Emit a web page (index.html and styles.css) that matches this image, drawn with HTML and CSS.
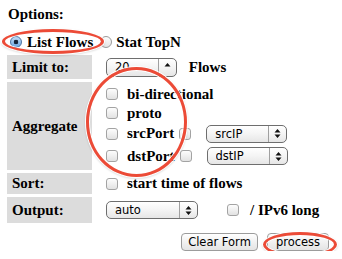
FILE: index.html
```html
<!DOCTYPE html>
<html lang="en">
<head>
  <meta charset="UTF-8" />
  <meta name="viewport" content="width=device-width, initial-scale=1.0" />
  <title>Options</title>
  <link rel="stylesheet" href="styles.css">
</head>
<body>
  <form class="options">
    <div class="title">Options:</div>
    <div class="mode">
      <label class="mode-item"><input type="radio" name="mode" class="radio" checked> List Flows</label>
      <label class="mode-item"><input type="radio" name="mode" class="radio radio-2"> Stat TopN</label>
    </div>

    <table class="opts">
      <tr class="row-limit">
        <th>Limit to:</th>
        <td>
          <span class="sel sel-limit">
            <select><option>20</option><option>50</option><option>100</option></select>
            <span class="arr arr-up"><svg width="7" height="11" viewBox="0 0 7 11"><path d="M3.5 1 L6.5 4.5 L0.5 4.5 Z" fill="#111"/></svg></span>
          </span>
          <span class="after-sel">Flows</span>
        </td>
      </tr>
      <tr class="row-agg">
        <th>Aggregate</th>
        <td>
          <div class="agg"><input type="checkbox" class="cb"> bi-directional</div>
          <div class="agg"><input type="checkbox" class="cb"> proto</div>
          <div class="agg agg-src">
            <input type="checkbox" class="cb"> srcPort
            <input type="checkbox" class="cb cb-2">
            <span class="sel sel-ip">
              <select><option>srcIP</option></select>
              <span class="arr"><svg width="7" height="11" viewBox="0 0 7 11"><path d="M3.5 1 L6.5 4.5 L0.5 4.5 Z M0.5 6.5 L6.5 6.5 L3.5 10 Z" fill="#111"/></svg></span>
            </span>
          </div>
          <div class="agg agg-dst">
            <input type="checkbox" class="cb"> dstPort
            <input type="checkbox" class="cb cb-2">
            <span class="sel sel-ip">
              <select><option>dstIP</option></select>
              <span class="arr"><svg width="7" height="11" viewBox="0 0 7 11"><path d="M3.5 1 L6.5 4.5 L0.5 4.5 Z M0.5 6.5 L6.5 6.5 L3.5 10 Z" fill="#111"/></svg></span>
            </span>
          </div>
        </td>
      </tr>
      <tr class="row-sort">
        <th>Sort:</th>
        <td><div class="agg"><input type="checkbox" class="cb"> start time of flows</div></td>
      </tr>
      <tr class="row-output">
        <th>Output:</th>
        <td>
          <div class="agg">
            <span class="sel sel-out">
              <select><option>auto</option><option>line</option><option>long</option></select>
              <span class="arr"><svg width="7" height="11" viewBox="0 0 7 11"><path d="M3.5 1 L6.5 4.5 L0.5 4.5 Z M0.5 6.5 L6.5 6.5 L3.5 10 Z" fill="#111"/></svg></span>
            </span>
            <input type="checkbox" class="cb cb-ipv6"> / IPv6 long
          </div>
        </td>
      </tr>
    </table>

    <div class="actions">
      <button type="reset" class="btn btn-clear">Clear Form</button>
      <button type="submit" class="btn btn-process">process</button>
    </div>
  </form>

  <!-- annotation marks drawn over the form -->
  <div class="mark mark-mode"></div>
  <div class="mark mark-agg"></div>
  <div class="mark mark-process"></div>
</body>
</html>
```

FILE: styles.css
```css
body {
  margin: 0;
  padding: 0 5px;
  position: relative;
  background-color: #fff;
  color: #000;
  font-family: "Liberation Serif", "Times New Roman", serif;
  font-size: 15px;
  font-weight: bold;
}
.title {
  padding: 6px 0 0 3px;
  line-height: 17px;
}
.mode {
  display: flex;
  align-items: center;
  height: 24px;
  margin-top: 7px;
}
.mode-item {
  display: flex;
  align-items: center;
}
.radio {
  appearance: none;
  width: 12px;
  height: 12px;
  margin: 0 5px;
  border: 1px solid #9a9a9a;
  border-radius: 50%;
  background: linear-gradient(#fdfdfd, #e4e4e4);
  box-sizing: border-box;
}
.radio:checked {
  border-color: #4d74a3;
  background: radial-gradient(circle, #15243a 0 2px, transparent 2.6px), linear-gradient(#c4def6, #6aa6e2);
}
.radio-2 {
  margin: 0 4px 0 7px;
}
.opts {
  border-collapse: separate;
  border-spacing: 2px 3px;
  margin-top: -2px;
}
.opts th {
  width: 80px;
  padding: 0 0 0 5px;
  background-color: #dcdcdc;
  text-align: left;
  vertical-align: middle;
}
.opts td {
  padding: 0 0 0 12px;
  white-space: nowrap;
  vertical-align: middle;
}
.row-limit { height: 24px; }
.row-agg { height: 88px; }
.row-sort { height: 21px; }
.row-output { height: 26px; }
.agg {
  display: flex;
  align-items: center;
  height: 19px;
}
.agg-src { height: 22px; }
.agg-dst { height: 23px; }
.cb {
  appearance: none;
  width: 12px;
  height: 12px;
  margin: 0 9px 0 0;
  border: 1px solid #a3a3a3;
  border-radius: 3px;
  background: linear-gradient(#fdfdfd, #e2e2e2);
  box-sizing: border-box;
  flex-shrink: 0;
}
.cb-2 {
  margin: 0 15px 0 5px;
}
.cb-ipv6 {
  margin: 0 11px 0 29px;
}
.sel {
  display: inline-flex;
  vertical-align: middle;
  height: 18px;
  box-sizing: border-box;
  border: 1px solid #6e6e6e;
  border-radius: 5px;
  background: linear-gradient(#fff, #f4f4f4 50%, #e6e6e6);
  overflow: hidden;
}
.sel select {
  appearance: none;
  flex: 1;
  min-width: 0;
  border: none;
  background: transparent;
  padding: 0 0 0 8px;
  margin: 0;
  color: #000;
  font-family: "DejaVu Sans", sans-serif;
  font-size: 11.5px;
  font-weight: normal;
}
.sel .arr {
  width: 17px;
  border-left: 1px solid #a0a0a0;
  display: flex;
  align-items: center;
  justify-content: center;
}
.sel .arr-up {
  align-items: flex-start;
  padding-top: 3px;
}
.sel-limit { width: 71px; height: 19px; }
.sel-ip { width: 81px; }
.sel-out { width: 92px; }
.after-sel {
  margin-left: 8px;
  vertical-align: middle;
}
.actions {
  display: flex;
  justify-content: flex-end;
  gap: 9px;
  padding-right: 8px;
  margin-top: 7px;
}
.btn {
  height: 18px;
  padding: 0;
  border: 1px solid #9c9c9c;
  border-radius: 4px;
  background: linear-gradient(#fff, #f1f1f1 50%, #e4e4e4);
  color: #000;
  font-family: "DejaVu Sans", sans-serif;
  font-size: 11.5px;
  line-height: 16px;
}
.btn-clear { width: 77px; }
.btn-process { width: 62px; }
.mark {
  position: absolute;
  box-sizing: border-box;
  border: 3px solid #ec4b37;
  border-radius: 50%;
  box-shadow: 0 0 0 1px #fff, inset 0 0 0 1px #fff, 0 1px 2px 1px rgba(0, 0, 0, 0.12);
  pointer-events: none;
}
.mark-mode {
  left: 2px;
  top: 29px;
  width: 102px;
  height: 25px;
}
.mark-agg {
  left: 86px;
  top: 67px;
  width: 101px;
  height: 110px;
}
.mark-process {
  left: 263px;
  top: 232px;
  width: 74px;
  height: 25px;
}
```
